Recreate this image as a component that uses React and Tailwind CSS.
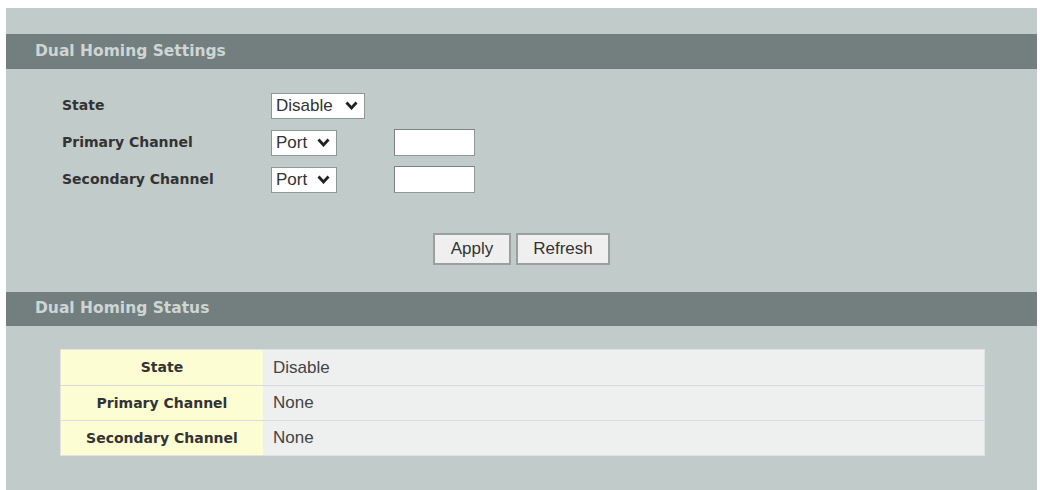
import React from 'react';

const Chevron = () => (
  <svg width="13" height="9" viewBox="0 0 13 9" className="shrink-0">
    <polyline points="1.5,1.5 6.5,7 11.5,1.5" fill="none" stroke="#222" strokeWidth="2.8" />
  </svg>
);

const Select = ({ value, width }) => (
  <div
    className={`flex items-center justify-between h-[26px] bg-white border border-[#8e9696] pl-[4px] pr-[6px] text-[17px] leading-none text-[#333] ${width}`}
    style={{ fontFamily: '"Liberation Sans", Arial, sans-serif' }}
  >
    <span>{value}</span>
    <Chevron />
  </div>
);

const SectionHeader = ({ title, height }) => (
  <div className={`${height} bg-[#737f7e] flex items-center pl-[29px]`}>
    <span
      className="text-[15.5px] font-bold text-[#cdd6d5]"
      style={{ fontFamily: '"DejaVu Sans", Verdana, sans-serif' }}
    >
      {title}
    </span>
  </div>
);

const labelFont = { fontFamily: '"DejaVu Sans", Verdana, sans-serif' };
const valueFont = { fontFamily: '"Liberation Sans", Arial, sans-serif' };

const statusRows = [
  { label: 'State', value: 'Disable' },
  { label: 'Primary Channel', value: 'None' },
  { label: 'Secondary Channel', value: 'None' },
];

export default function App() {
  return (
    <div className="w-[1040px] h-[490px] bg-white pt-[8px] pl-[6px] pr-[3px] overflow-hidden">
      <div className="h-full bg-[#c1cbca] flex flex-col pt-[26px]">
        <SectionHeader title="Dual Homing Settings" height="h-[35px]" />

        {/* settings form */}
        <div className="mt-[18px] pl-[56px] flex flex-col">
          <div className="h-[37px] flex items-center">
            <span className="w-[209px] text-[14px] font-bold text-[#333]" style={labelFont}>State</span>
            <Select value="Disable" width="w-[94px]" />
          </div>
          <div className="h-[37px] flex items-center">
            <span className="w-[209px] text-[14px] font-bold text-[#333]" style={labelFont}>Primary Channel</span>
            <Select value="Port" width="w-[66px]" />
            <div className="ml-[57px] w-[81px] h-[27px] bg-white border border-[#8e9696] border-t-[#7a8282] border-l-[#7a8282]" />
          </div>
          <div className="h-[37px] flex items-center">
            <span className="w-[209px] text-[14px] font-bold text-[#333]" style={labelFont}>Secondary Channel</span>
            <Select value="Port" width="w-[66px]" />
            <div className="ml-[57px] w-[81px] h-[27px] bg-white border border-[#8e9696] border-t-[#7a8282] border-l-[#7a8282]" />
          </div>
        </div>

        <div className="mt-[35px] flex justify-center gap-[5px]" style={valueFont}>
          <button className="w-[78px] h-[32px] bg-[#efefef] border-2 border-[#9aa0a0] text-[17px] text-[#333]">
            Apply
          </button>
          <button className="w-[94px] h-[32px] bg-[#efefef] border-2 border-[#9aa0a0] text-[17px] text-[#333]">
            Refresh
          </button>
        </div>

        <div className="mt-[27px]">
          <SectionHeader title="Dual Homing Status" height="h-[34px]" />
        </div>

        {/* status table */}
        <div className="mt-[23px] ml-[54px] w-[925px] flex flex-col border border-[#dfe4e3]">
          {statusRows.map((row, i) => (
            <div
              key={row.label}
              className={`flex h-[35px] ${i > 0 ? 'border-t border-[#d9dcdc]' : ''}`}
            >
              <div
                className="w-[202px] bg-[#fdfdd3] flex items-center justify-center text-[14px] font-bold text-[#333]"
                style={labelFont}
              >
                {row.label}
              </div>
              <div
                className="flex-1 bg-[#eeefef] flex items-center pl-[10px] text-[17px] text-[#444]"
                style={valueFont}
              >
                {row.value}
              </div>
            </div>
          ))}
        </div>
      </div>
    </div>
  );
}
